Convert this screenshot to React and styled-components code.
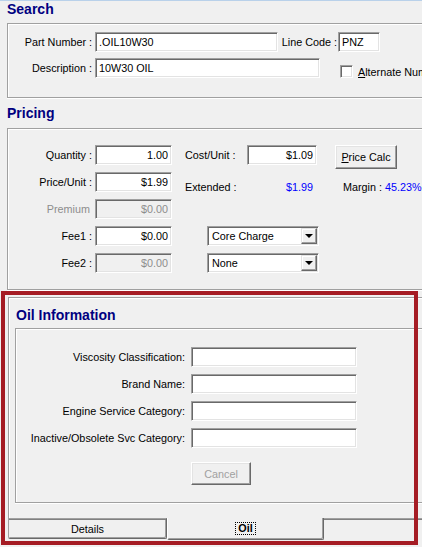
import styled, { createGlobalStyle } from "styled-components";

const GlobalStyle = createGlobalStyle`
  html, body {
    margin: 0;
    padding: 0;
    background: #f0f0f0;
  }
  body {
    font-family: "Liberation Sans", Arial, sans-serif;
    font-size: 10.8px;
    color: #000;
  }
`;

const Window = styled.div`
  position: relative;
  box-sizing: border-box;
  width: 422px;
  height: 547px;
  overflow: hidden;
  background: #f0f0f0;
  border-top: 1px solid #b9d1ea;
  padding-left: 7px;
`;

const SectionTitle = styled.div`
  height: ${props => props.$h}px;
  margin-top: ${props => props.$mt || 0}px;
  padding-left: ${props => props.$pl || 0}px;
  font-size: 14px;
  line-height: 16px;
  font-weight: bold;
  color: #000080;
`;

const GroupBox = styled.div`
  box-sizing: border-box;
  width: 440px;
  height: ${props => props.$h}px;
  border: 1px solid #a0a0a0;
  border-right: none;
  box-shadow: inset 1px 1px 0 #fff, 0 1px 0 #fff;
  padding-top: ${props => props.$pt}px;
  display: flex;
  flex-direction: column;
  gap: ${props => props.$gap}px;
`;

const Row = styled.div`
  display: flex;
  align-items: flex-start;
  height: 20px;
  margin-top: ${props => props.$mt || 0}px;
`;

const Label = styled.span`
  flex: none;
  box-sizing: border-box;
  width: ${props => props.$w}px;
  margin-left: ${props => props.$ml || 0}px;
  margin-right: ${props => props.$mr || 0}px;
  padding-top: ${props => props.$pt || 0}px;
  padding-right: ${props => props.$pr || 0}px;
  text-align: ${props => props.$align || "right"};
  line-height: 20px;
  white-space: nowrap;
  color: ${props => (props.$disabled ? "#8d8d8d" : props.$blue ? "#0000ff" : "#000")};
`;

const Field = styled.input`
  flex: none;
  box-sizing: border-box;
  width: ${props => props.$w}px;
  height: 20px;
  margin: 0 0 0 ${props => props.$ml || 0}px;
  padding: 0 3px;
  border: 1px solid;
  border-color: #a0a0a0 #fff #fff #a0a0a0;
  box-shadow: inset 1px 1px 0 #696969, inset -1px -1px 0 #e3e3e3;
  background: #fff;
  font-family: "Liberation Sans", Arial, sans-serif;
  font-size: 10.8px;
  color: #000;
  text-align: ${props => props.$align || "left"};
  outline: none;

  &:disabled {
    background: #f0f0f0;
    color: #8d8d8d;
  }
`;

const RaisedButton = styled.button`
  flex: none;
  box-sizing: border-box;
  width: ${props => props.$w}px;
  height: ${props => props.$h}px;
  margin: 0 0 0 ${props => props.$ml || 0}px;
  padding: 0;
  border: 1px solid;
  border-color: #fff #696969 #696969 #fff;
  box-shadow: inset -1px -1px 0 #a0a0a0, inset 1px 1px 0 #e3e3e3;
  background: #f0f0f0;
  font-family: "Liberation Sans", Arial, sans-serif;
  font-size: 10.8px;
  color: #000;

  &:disabled {
    color: #a0a0a0;
  }
`;

const Combo = styled.div`
  flex: none;
  box-sizing: border-box;
  display: flex;
  align-items: center;
  width: 112px;
  height: 20px;
  margin-left: 35px;
  padding: 1px 1px 1px 4px;
  border: 1px solid;
  border-color: #a0a0a0 #fff #fff #a0a0a0;
  box-shadow: inset 1px 1px 0 #696969, inset -1px -1px 0 #e3e3e3;
  background: #fff;
`;

const ComboText = styled.span`
  flex: 1;
  line-height: 16px;
`;

const ComboButton = styled.span`
  box-sizing: border-box;
  display: flex;
  align-items: center;
  justify-content: center;
  width: 16px;
  height: 16px;
  border: 1px solid;
  border-color: #e3e3e3 #696969 #696969 #e3e3e3;
  box-shadow: inset -1px -1px 0 #a0a0a0, inset 1px 1px 0 #fff;
  background: #f0f0f0;

  &::after {
    content: "";
    border-left: 4px solid transparent;
    border-right: 4px solid transparent;
    border-top: 4px solid #000;
  }
`;

const CheckWrap = styled.label`
  display: flex;
  align-items: center;
  gap: 5px;
  margin-left: 20px;
  margin-top: 7px;
  white-space: nowrap;
`;

const CheckBox = styled.span`
  box-sizing: border-box;
  width: 13px;
  height: 13px;
  border: 1px solid;
  border-color: #a0a0a0 #fff #fff #a0a0a0;
  box-shadow: inset 1px 1px 0 #696969, inset -1px -1px 0 #e3e3e3;
  background: #fff;
`;

const TabPanel = styled.div`
  box-sizing: border-box;
  width: 440px;
  height: 221px;
  margin: 7px 0 0 1px;
  padding: 9px 0 0 6px;
  border-top: 1px solid #a0a0a0;
  border-left: 1px solid #a0a0a0;
  box-shadow: inset 1px 1px 0 #fff;
`;

const TabStrip = styled.div`
  display: flex;
  align-items: flex-start;
  margin-left: 1px;
  width: 440px;
`;

const Tab = styled.div`
  box-sizing: border-box;
  width: ${props => (props.$active ? 157 : 159)}px;
  height: ${props => (props.$active ? 22 : 21)}px;
  display: flex;
  align-items: center;
  justify-content: center;
  border-bottom-left-radius: 2px;
  border-bottom-right-radius: 2px;
  ${props =>
    props.$active
      ? `
    border-left: 1px solid #fff;
    border-right: 1px solid #696969;
    border-bottom: 1px solid #696969;
    box-shadow: inset -1px -1px 0 #a0a0a0;
    font-weight: bold;
  `
      : `
    border-top: 1px solid #a0a0a0;
    border-left: 1px solid #a0a0a0;
    border-right: 1px solid #696969;
    border-bottom: 1px solid #696969;
    box-shadow: inset 0 1px 0 #808080, inset -1px -1px 0 #a0a0a0;
  `}
`;

const FocusRect = styled.span`
  border: 1px dotted #000;
  padding: 0 2px;
  line-height: 11px;
`;

const TabFiller = styled.div`
  flex: 1;
  height: 2px;
  border-top: 1px solid #a0a0a0;
  box-shadow: inset 0 1px 0 #808080;
`;

const Highlight = styled.div`
  position: absolute;
  left: 1px;
  top: 290px;
  box-sizing: border-box;
  width: 417px;
  height: 254px;
  border: 4px solid #a51c24;
  pointer-events: none;
`;

const oilFields = [
  "Viscosity Classification:",
  "Brand Name:",
  "Engine Service Category:",
  "Inactive/Obsolete Svc Category:",
];

const App = () => (
  <Window>
    <GlobalStyle />
    <SectionTitle $h={22}>Search</SectionTitle>
    <GroupBox $h={75} $pt={8} $gap={6}>
      <Row>
        <Label $w={84} $mr={3}>Part Number :</Label>
        <Field $w={183} defaultValue=".OIL10W30" readOnly />
        <Label $w={57} $ml={2} $mr={1}>Line Code :</Label>
        <Field $w={42} defaultValue="PNZ" readOnly />
      </Row>
      <Row>
        <Label $w={84} $mr={3}>Description :</Label>
        <Field $w={225} defaultValue="10W30 OIL" readOnly />
        <CheckWrap>
          <CheckBox />
          <span><u>A</u>lternate Number</span>
        </CheckWrap>
      </Row>
    </GroupBox>

    <SectionTitle $h={23} $mt={7}>Pricing</SectionTitle>
    <GroupBox $h={162} $pt={16} $gap={7}>
      <Row>
        <Label $w={84} $mr={3}>Quantity :</Label>
        <Field $w={77} $align="right" defaultValue="1.00" readOnly />
        <Label $w={62} $ml={13} $align="left">Cost/Unit :</Label>
        <Field $w={70} $align="right" defaultValue="$1.09" readOnly />
        <RaisedButton $w={62} $h={24} $ml={18}>
          <u>P</u>rice Calc
        </RaisedButton>
      </Row>
      <Row>
        <Label $w={84} $mr={3}>Price/Unit :</Label>
        <Field $w={77} $align="right" defaultValue="$1.99" readOnly />
        <Label $w={62} $ml={13} $pt={5} $align="left">Extended :</Label>
        <Label $w={66} $pt={5} $blue>$1.99</Label>
        <Label $ml={30} $pt={5} $align="left">Margin : </Label>
        <Label $ml={3} $pt={5} $align="left" $blue>45.23%</Label>
      </Row>
      <Row>
        <Label $w={84} $mr={3} $pr={2} $disabled>Premium</Label>
        <Field $w={77} $align="right" defaultValue="$0.00" disabled />
      </Row>
      <Row>
        <Label $w={84} $mr={3}>Fee1 :</Label>
        <Field $w={77} $align="right" defaultValue="$0.00" readOnly />
        <Combo>
          <ComboText>Core Charge</ComboText>
          <ComboButton />
        </Combo>
      </Row>
      <Row>
        <Label $w={84} $mr={3}>Fee2 :</Label>
        <Field $w={77} $align="right" defaultValue="$0.00" disabled />
        <Combo>
          <ComboText>None</ComboText>
          <ComboButton />
        </Combo>
      </Row>
    </GroupBox>

    <TabPanel>
      <SectionTitle $h={21} $pl={1}>Oil Information</SectionTitle>
      <GroupBox $h={175} $pt={18} $gap={7}>
        {oilFields.map(name => (
          <Row key={name}>
            <Label $w={169} $mr={6}>{name}</Label>
            <Field $w={166} defaultValue="" readOnly />
          </Row>
        ))}
        <Row $mt={7}>
          <Label $w={169} $mr={6} />
          <RaisedButton $w={60} $h={23} disabled>Cancel</RaisedButton>
        </Row>
      </GroupBox>
    </TabPanel>
    <TabStrip>
      <Tab>Details</Tab>
      <Tab $active>
        <FocusRect>Oil</FocusRect>
      </Tab>
      <TabFiller />
    </TabStrip>

    <Highlight />
  </Window>
);

export default App;
